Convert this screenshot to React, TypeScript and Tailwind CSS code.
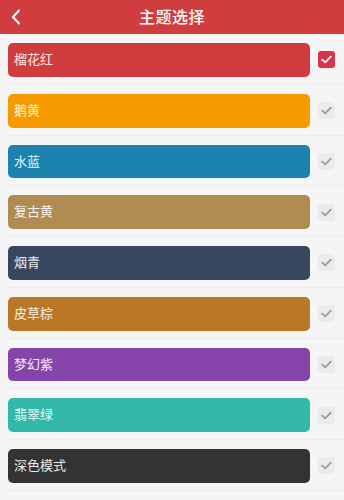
import React from "react";

const themes = [
  { name: "榴花红", cls: "bg-[#cf3d3f]", checked: true },
  { name: "鹅黄", cls: "bg-[#f59a00]" },
  { name: "水蓝", cls: "bg-[#1c83af]" },
  { name: "复古黄", cls: "bg-[#b08c53]" },
  { name: "烟青", cls: "bg-[#38475e]" },
  { name: "皮草棕", cls: "bg-[#ba7725]" },
  { name: "梦幻紫", cls: "bg-[#8544a8]" },
  { name: "翡翠绿", cls: "bg-[#33b9aa]" },
  { name: "深色模式", cls: "bg-[#333333]" },
];

export default function App() {
  return (
    <div
      className="w-[344px] h-[500px] bg-[#f5f5f5] overflow-hidden"
      style={{ fontFamily: '"Noto Sans", "Noto Sans CJK SC", sans-serif' }}
    >
      <div className="h-[34px] bg-[#d03d3f] relative flex items-center justify-center">
        <svg
          className="absolute left-[11px] top-[9px]"
          width="10"
          height="16"
          viewBox="0 0 10 16"
          fill="none"
        >
          <path d="M8 1.5L2 8l6 6.5" stroke="white" strokeWidth="2" strokeLinecap="round" strokeLinejoin="round" />
        </svg>
        <span className="text-white text-[16px] font-medium tracking-[0.5px]">主题选择</span>
      </div>
      {themes.map((t) => (
        <div key={t.name} className="ml-2 flex items-center border-b border-[#ebebeb] pt-[9px] pb-[7px]">
          <div className={`${t.cls} w-[302px] h-[33.75px] rounded-[5px] flex items-center pl-[6px]`}>
            <span className="text-white/90 text-[13px]">{t.name}</span>
          </div>
          <div
            className={`ml-[8px] w-[17px] h-[17px] rounded-[3px] flex items-center justify-center ${
              t.checked ? "bg-[#d9344a]" : "bg-[#ebebeb]"
            }`}
          >
            <svg width="11" height="9" viewBox="0 0 11 9" fill="none">
              <path
                d="M1.2 4.6L4.2 7.4L9.8 1.6"
                stroke={t.checked ? "white" : "#9a9a9a"}
                strokeWidth="1.8"
                strokeLinecap="round"
                strokeLinejoin="round"
              />
            </svg>
          </div>
        </div>
      ))}
    </div>
  );
}
